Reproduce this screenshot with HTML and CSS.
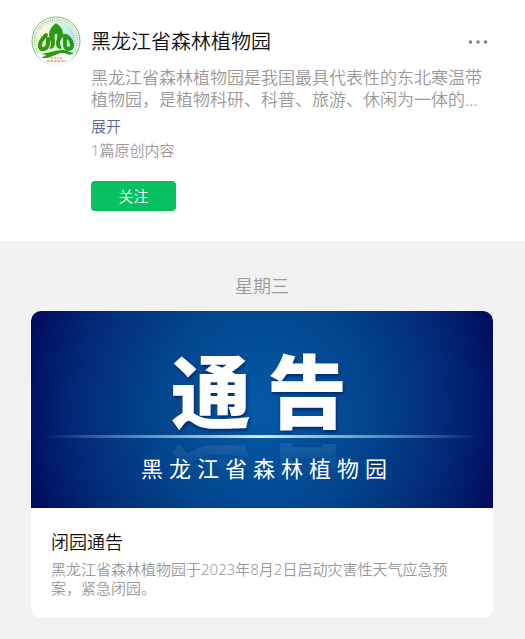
FILE: index.html
```html
<!DOCTYPE html>
<html lang="zh-CN">

<head>
  <meta charset="utf-8">
  <meta name="viewport" content="width=device-width, initial-scale=1">
  <title>黑龙江省森林植物园</title>
  <link rel="stylesheet" href="styles.css">
</head>

<body>
  <header class="profile">
    <svg class="avatar" viewBox="0 0 50 50" aria-hidden="true">
      <defs>
        <linearGradient id="sky" x1="0" y1="0" x2="1" y2="0">
          <stop offset="0" stop-color="#fffbd0"/>
          <stop offset="0.5" stop-color="#e8f8ee"/>
          <stop offset="1" stop-color="#a4e4f5"/>
        </linearGradient>
      </defs>
      <circle cx="25" cy="25" r="24" fill="#fff" stroke="#70bc78" stroke-width="1"/>
      <circle cx="25" cy="25" r="21.500" fill="none" stroke="#a3cf9c" stroke-width="2" stroke-dasharray="1.2 0.9"/>
      <circle cx="25" cy="25" r="19.500" fill="url(#sky)" stroke="#b5dfb4" stroke-width="0.600"/>
      <path d="M5 37h40a22 22 0 0 1-40 0z" fill="#fff"/>
      <!-- three peaks over the ground line -->
      <path d="M25 7c-4 3-7 7-7 12 0 4 2 6 2 9 0 2-2 4-1 5 3 0 5-3 5-6s-1-5 0-9h2c1 4-1 6-1 9 0 4 2 6 5 6 1-2-1-4-1-6 0-3 3-5 3-9 0-5-3-8-7-11z" fill="#2c9a10"/>
      <g fill="none" stroke="#2c9a10" stroke-width="4" stroke-linecap="round" stroke-linejoin="round">
        <path d="M15 19c-4 4-7 8-6 12 2 4 7 2 8-3v-5"/>
        <path d="M33 20c4-1 8 5 8 9 0 4-4 5-6 3-2-3-1-6-1-9"/>
      </g>
      <path d="M10 38c8-1 14-4 22-4 4 0 7 3 11 3-3 3-7 1-10 0-7-1-12 6-23 5 2-1 4-2 5-3z" fill="#2c9a10"/>
      <path d="M20 42h11" stroke="#e9a283" stroke-width="1.400" stroke-dasharray="2 1"/>
      <path d="M16 45h19" stroke="#f0ac8c" stroke-width="2" stroke-dasharray="2.500 1"/>
    </svg>
    <div class="info">
      <div class="name-row">
        <h1 class="name">黑龙江省森林植物园</h1>
        <button class="more" type="button" aria-label="更多">
          <svg width="20" height="4" viewBox="0 0 20 4" fill="#7b7f7f">
            <circle cx="2.500" cy="2" r="1.700"/>
            <circle cx="10" cy="2" r="1.700"/>
            <circle cx="17.500" cy="2" r="1.700"/>
          </svg>
        </button>
      </div>
      <p class="intro">黑龙江省森林植物园是我国最具代表性的东北寒温带植物园，是植物科研、科普、旅游、休闲为一体的...</p>
      <a class="expand" href="#">展开</a>
      <p class="count">1篇原创内容</p>
      <button class="follow" type="button">关注</button>
    </div>
  </header>

  <main class="feed">
    <p class="day">星期三</p>
    <article class="card">
      <div class="banner">
        <div class="banner-title">通告</div>
        <div class="beam"></div>
        <div class="banner-sub">黑龙江省森林植物园</div>
      </div>
      <div class="card-text">
        <h2 class="card-title">闭园通告</h2>
        <p class="card-desc">黑龙江省森林植物园于2023年8月2日启动灾害性天气应急预案，紧急闭园。</p>
      </div>
    </article>
  </main>
</body>

</html>
```
FILE: styles.css
```css
* {
  box-sizing: border-box;
}

body {
  margin: 0;
  min-height: 100vh;
  background: #f2f2f2;
  color: #111;
  font-family: "Noto Sans", "Noto Sans CJK SC", sans-serif;
  font-weight: 350;
}

h1,
h2,
p {
  margin: 0;
  font-weight: inherit;
}

button {
  border: 0;
  padding: 0;
  font-family: inherit;
  font-weight: inherit;
  cursor: pointer;
}

/* account header */
.profile {
  display: flex;
  gap: 10px;
  padding: 16px 32px 30px 31px;
  background: #fff;
}

.avatar {
  flex: none;
  width: 50px;
  height: 50px;
}

.info {
  flex: 1;
  min-width: 0;
}

.name-row {
  display: flex;
  align-items: center;
  justify-content: space-between;
  height: 51px;
}

.name {
  font-size: 20px;
  line-height: 28px;
}

.more {
  display: flex;
  padding: 8px 5px;
  background: none;
}

.intro {
  color: #999;
  font-size: 17px;
  line-height: 22px;
}

.expand {
  display: block;
  margin-top: 3px;
  color: #576b95;
  font-size: 15px;
  line-height: 24px;
  text-decoration: none;
}

.count {
  color: #999;
  font-size: 15px;
  line-height: 24px;
}

.follow {
  display: block;
  width: 85px;
  height: 30px;
  margin-top: 19px;
  border-radius: 4px;
  background: #07c160;
  color: #fff;
  font-size: 15px;
  line-height: 30px;
}

/* messages */
.feed {
  padding: 32px 32px 21px 31px;
}

.day {
  color: #999;
  font-size: 18px;
  line-height: 26px;
  text-align: center;
}

.card {
  margin-top: 12px;
  border-radius: 10px;
  overflow: hidden;
  background: #fff;
}

.banner {
  padding: 36px 0 25px;
  background:
    radial-gradient(ellipse 56% 140% at 50% 50%, #0459a5 0%, #03468f 40%, #022b7a 70%, #010557 100%);
  color: #fff;
  text-align: center;
}

.banner-title {
  padding-left: 10px;
  font-size: 80px;
  font-weight: 900;
  line-height: 88px;
  letter-spacing: 16px;
  text-shadow: 1px 2px 3px rgba(0, 20, 70, 0.6);
  -webkit-box-reflect: below 4px linear-gradient(transparent 60%, rgba(255, 255, 255, 0.1));
}

.beam {
  height: 3px;
  background: linear-gradient(90deg, transparent 3%, #608fbd 25%, #d3ebdf 50%, #608fbd 75%, transparent 97%);
}

.banner-sub {
  margin-top: 15px;
  padding-left: 10px;
  font-size: 22px;
  font-weight: 400;
  line-height: 30px;
  letter-spacing: 6px;
}

.card-text {
  padding: 20px 30px 20px 20px;
}

.card-title {
  font-size: 18px;
  line-height: 28px;
}

.card-desc {
  margin-top: 4px;
  color: #999;
  font-size: 15px;
  line-height: 19px;
}
```
